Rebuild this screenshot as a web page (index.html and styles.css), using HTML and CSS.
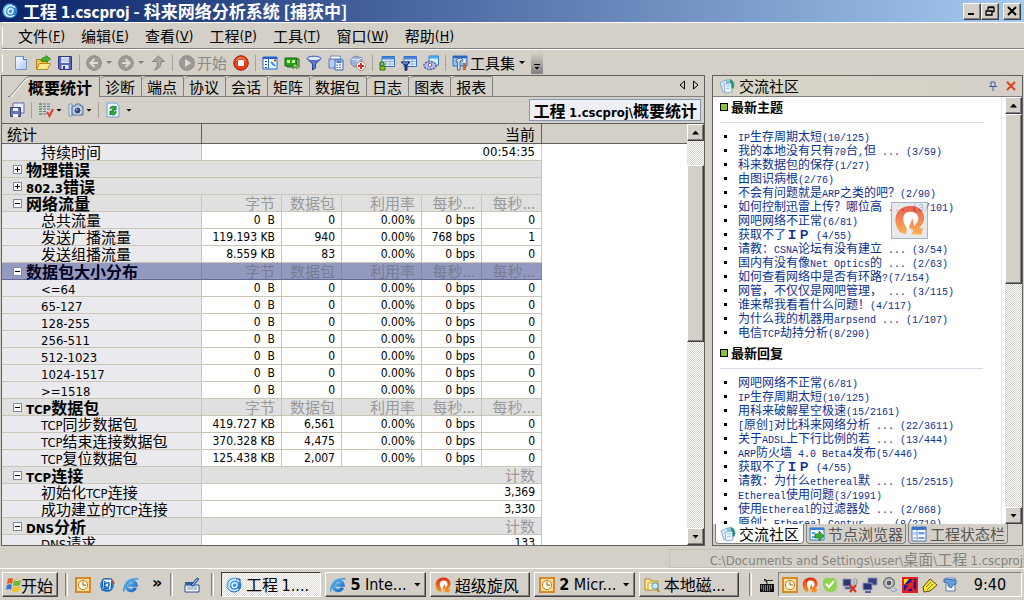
FILE: index.html
```html
<!DOCTYPE html>
<html lang="zh-CN">
<head>
<meta charset="utf-8">
<title>工程 1.cscproj - 科来网络分析系统</title>
<link rel="stylesheet" href="styles.css">
</head>
<body>
<svg class="defs" aria-hidden="true">
<defs>
<linearGradient id="g-blue" x1="0" y1="0" x2="1" y2="1"><stop offset="0" stop-color="#6fc4f6"/><stop offset="1" stop-color="#1264c4"/></linearGradient>
<linearGradient id="g-page" x1="0" y1="0" x2="1" y2="1"><stop offset="0" stop-color="#fff"/><stop offset="1" stop-color="#a9c8f4"/></linearGradient>
<linearGradient id="g-fire" x1="0" y1="0" x2="0" y2="1"><stop offset="0" stop-color="#e02a14"/><stop offset="1" stop-color="#ff9a1c"/></linearGradient>
</defs>
<symbol id="app" viewBox="0 0 16 16"><circle cx="8" cy="8" r="7.500" fill="url(#g-blue)"/><path d="M13 4.500C10 .8 3.500 2.500 3 8s5.500 7 9.500 4M6 8.500c0-3 5-4 5-.8S6.500 12 6 8.500" fill="none" stroke="#e8f7ff" stroke-width="1.400"/><path d="M10 2h4v2" stroke="#1548a0" fill="none"/></symbol>
<symbol id="new" viewBox="0 0 16 16"><path d="M2.500 1.500h8l3 3v10h-11z" fill="url(#g-page)" stroke="#6f93cd"/><path d="M10.500 1.500v3h3" fill="#fff" stroke="#4b74b8"/></symbol>
<symbol id="open" viewBox="0 0 16 16"><path d="M1.500 14.500V4.500h4l1 2h6v8z" fill="#f0c850" stroke="#a87f1c"/><path d="M1.500 14.500l3-6h11l-3 6z" fill="#ffe88a" stroke="#b58c20"/><path d="M6 5.500Q7 1.500 11 2.500V.5l4.500 3.500L11 7V5Q8 4.500 8 7z" fill="#43bd2a" stroke="#17700e" stroke-width=".7"/></symbol>
<symbol id="save" viewBox="0 0 16 16"><path d="M1.500 1.500h13v13h-12l-1-1z" fill="#5866b8" stroke="#2b3884"/><path d="M4 2h8v6H4z" fill="#e8edff"/><path d="M4 4h8M4 6h8" stroke="#9eb0df"/><path d="M4.500 10h7v4h-7z" fill="#dfe3ef"/><path d="M6 11h2v3H6z" fill="#303d80"/></symbol>
<symbol id="back" viewBox="0 0 16 16"><circle cx="8" cy="8" r="7.300" fill="#9d9b96" stroke="#8c8a86"/><path d="M12 8H5m3.500-4L4.500 8l4 4" fill="none" stroke="#dedcd6" stroke-width="2"/></symbol>
<symbol id="fwd" viewBox="0 0 16 16"><circle cx="8" cy="8" r="7.300" fill="#9d9b96" stroke="#8c8a86"/><path d="M4 8h7M7.500 4l4 4-4 4" fill="none" stroke="#dedcd6" stroke-width="2"/></symbol>
<symbol id="up" viewBox="0 0 16 16"><path d="M8.500 1l6 5.500H11c.5 4-2 7.500-6.500 8.500 3-3 3-5 2.500-8.500H2.500z" fill="#aaa8a3" stroke="#83817c"/></symbol>
<symbol id="play" viewBox="0 0 16 16"><circle cx="8" cy="8" r="7.300" fill="#9b9a96" stroke="#8c8a86"/><path d="M6 4l6 4-6 4z" fill="#dddbd6"/></symbol>
<symbol id="stop" viewBox="0 0 16 16"><circle cx="8" cy="8" r="7.300" fill="#e1401b" stroke="#a52209"/><path d="M3 6a5.500 5.500 0 0 1 10 0" stroke="#ff9b74" fill="none"/><rect x="5" y="5" width="6" height="6" rx="1" fill="#fff"/></symbol>
<symbol id="panes" viewBox="0 0 16 16"><path d="M1 2h14v12H1z" fill="#f5faff" stroke="#2567c6"/><path d="M1 2h14v2H1z" fill="#1e62d0"/><path d="M6.500 4v10" stroke="#2a6ed0"/><path d="M3 6h2v1H3m0 2h2v1H3m0 2h2v1H3" fill="#1f4cab"/><path d="M9 7l4 4" stroke="#3d8cf0" stroke-width="2"/><path d="M12 5.500h2" stroke="#e43b26" stroke-width="2"/></symbol>
<symbol id="card" viewBox="0 0 16 16"><path d="M1 3h12v8H1z" fill="#2fa51c" stroke="#13600e"/><path d="M3 5h3v3H3m5-3h3v3H8" fill="#c8f48f"/><path d="M13 4h2v9M4 11v2m2-2v2m2-2v2" stroke="#126012" fill="none"/><path d="M9 9h4v5l-2-2-2 2z" fill="#86d94b" stroke="#176b12" stroke-width=".7"/></symbol>
<symbol id="funnel" viewBox="0 0 16 16"><path d="M1 3.500L6.500 9v6l3-2V9L15 3.500z" fill="#587ed0" stroke="#213f93"/><ellipse cx="8" cy="3.500" rx="6.800" ry="2.300" fill="#dceaff" stroke="#3558ae"/></symbol>
<symbol id="calc" viewBox="0 0 16 16"><path d="M1 4h12v9H1z" fill="#b8cff0" stroke="#5c7cb5"/><path d="M3 1h9l1 3H2z" fill="#f6f9ff" stroke="#738cb8"/><path d="M7 5h8v10H7z" fill="#e8f0ff" stroke="#3b63b0"/><path d="M8.500 7h5" stroke="#4c77d0" stroke-width="2"/><path d="M8.500 10h1.500m1 0h2M8.500 12.500h1.500m1 0h2" stroke="#5873aa"/></symbol>
<symbol id="heal" viewBox="0 0 16 16"><path d="M1 4l4-3 7 2v8l-8 1-3-3z" fill="#9ab2df" stroke="#7187b4"/><path d="M1 4l7 1 4-2M8 5v7" fill="none" stroke="#e7f0ff"/><circle cx="11" cy="11" r="4.500" fill="#fff" stroke="#b77b78"/><path d="M11 8v6m-3-3h6" stroke="#e12a1c" stroke-width="2"/></symbol>
<symbol id="grid" viewBox="0 0 16 16"><path d="M3 1.500h12.500v10H3z" fill="#f3f8ff" stroke="#3571c6"/><path d="M3 2h12.500v2.500H3z" fill="#4684dd"/><path d="M4 6.500h11M4 9h11M7 5v6m4-6v6" stroke="#88aede"/></symbol>
<symbol id="gridkey" viewBox="0 0 16 16"><use href="#grid"/><circle cx="3" cy="9" r="2" fill="none" stroke="#44850b" stroke-width="1.500"/><path d="M1 11h5v4H1z" fill="#83bc24" stroke="#36700c"/></symbol>
<symbol id="gridfun" viewBox="0 0 16 16"><use href="#grid"/><path d="M0 7h9L6 10v5l-2 .5V10z" fill="#2848a0" stroke="#112874"/><path d="M2 8h5" stroke="#9fb4ef"/></symbol>
<symbol id="gear" viewBox="0 0 16 16"><path d="M6 1h9.500v9H6z" fill="#d9f0ff" stroke="#267dd0"/><path d="M6 1h9.500v2.500H6z" fill="#42a2eb"/><ellipse cx="7" cy="10.500" rx="6" ry="4" fill="#b7b9e9" stroke="#555a9c" stroke-dasharray="2 1" stroke-width="1.500"/><circle cx="7" cy="10" r="1.700" fill="#fff" stroke="#666dac"/></symbol>
<symbol id="tools" viewBox="0 0 16 16"><path d="M1 1h14v10H1z" fill="#8fc1f5" stroke="#316ebc"/><path d="M1 1h14v2H1z" fill="#2c65c1"/><path d="M4 7l1-3 4-1 2 2-3 1v9H5.500V7z" fill="#dee3eb" stroke="#516988"/><path d="M12.500 4v5" stroke="#e8e8ee" stroke-width="2"/><path d="M12.500 8v7" stroke="#d56424" stroke-width="3"/></symbol>
<symbol id="saves" viewBox="0 0 16 16"><path d="M4 1h11v10H4z" fill="#e9edfc" stroke="#5f6ba5"/><path d="M1.500 5.500h10v9h-10z" fill="#6573b9" stroke="#37447d"/><path d="M4 6h5v3H4m0 3h5v3H4" fill="#f2f5ff"/></symbol>
<symbol id="listcheck" viewBox="0 0 16 16"><path d="M1 2h12M1 4.500h12M1 7h12M1 9.500h8M1 12h7" stroke="#4a75b6" stroke-dasharray="3 1"/><path d="M1 2h3m-3 2.500h3m-3 2.500h3m-3 2.500h3m-3 2.500h3" stroke="#34a45b"/><path d="M9 10l2.500 4L15 7" fill="none" stroke="#e33a2b" stroke-width="2"/></symbol>
<symbol id="camera" viewBox="0 0 16 16"><path d="M1 2h3v12H1z" fill="#dce7f9" stroke="#8094bd"/><path d="M4 4h3l1-2h4l1 2h2v9H4z" fill="#a9bbdf" stroke="#5f749e"/><circle cx="9.500" cy="8.500" r="3.600" fill="#344581" stroke="#eef3ff"/><circle cx="8.500" cy="7.500" r="1" fill="#84b8ee"/></symbol>
<symbol id="refresh" viewBox="0 0 16 16"><path d="M2 1h9l3 3v11H2z" fill="#eaf2ff" stroke="#779ecf"/><path d="M5 7a3 3 0 0 1 5-2l1-1v4H7l1.500-1.500M11 9a3 3 0 0 1-5 3l-1 1V9h4l-1.500 1.500" fill="#2faa36" stroke="#16862a"/></symbol>
<symbol id="people" viewBox="0 0 16 16"><circle cx="10" cy="6.500" r="5.700" fill="#8fc6d8"/><path d="M11 1q6 4 3 10l-3-3z" fill="#278f5b"/><path d="M1 5l6-3 3 8-6 4z" fill="#d9e9fc" stroke="#6c9bd0" stroke-width=".8"/><path d="M5 6l7-1 1 9-7 1z" fill="#eef6ff" stroke="#72a1d8" stroke-width=".8"/><path d="M7 8l4-.5M7 10.500l4-.5" stroke="#9dbfe6"/></symbol>
<symbol id="node" viewBox="0 0 16 16"><path d="M1 2h14v12H1z" fill="#eff7ff" stroke="#2876cd"/><path d="M1 2h14v2H1z" fill="#3680dc"/><path d="M3 6h3v2H3m0 2h3v2H3" fill="#5d9de2"/><path d="M6 8h4V5l5 5-5 5v-3H6z" fill="#38ae35" stroke="#126f17" stroke-width=".7"/></symbol>
<symbol id="state" viewBox="0 0 16 16"><path d="M1 1h14v14H1z" fill="#f8fcff" stroke="#4e75ac"/><path d="M1 1h14v3H1z" fill="#3a77c9"/><path d="M2 6h12v3H2z" fill="#b9d5f5"/><path d="M6 4v11M2 12h12" stroke="#82a5d6"/><path d="M8 7h5m-5 5h5" stroke="#2d65ba"/></symbol>
<symbol id="clock" viewBox="0 0 16 16"><path d="M1 1h14v14H1z" fill="#f8dfa0" stroke="#d68b27" stroke-width="2"/><circle cx="8" cy="8" r="4.600" fill="#fff8de" stroke="#b78336"/><path d="M8 4.500V8h3" fill="none" stroke="#8c632a"/></symbol>
<symbol id="mail" viewBox="0 0 16 16"><circle cx="8" cy="8" r="7" fill="#2687cf"/><path d="M4 2h9l-1 11H3z" fill="#e6f5ff" stroke="#15509b"/><path d="M5 8q6-5 5 0t-4 1m0-5l-1 8 5-1" fill="none" stroke="#1968c3" stroke-width="1.500"/><path d="M13 2l3 4-2 2z" fill="#e54021"/></symbol>
<symbol id="ie" viewBox="0 0 16 16"><path d="M12.500 10.800A5 5 0 1 1 13 8H5" fill="none" stroke="url(#g-blue)" stroke-width="3.400"/><path d="M1 14.500C-1 9 9 0 15.500 2" fill="none" stroke="#3b96dd" stroke-width="1.500"/></symbol>
<symbol id="pen" viewBox="0 0 16 16"><path d="M1 8h14v7H1z" fill="#f5f8ff" stroke="#244d8d"/><path d="M3 10h10M3 12h10" stroke="#829abf"/><path d="M1 5h9v3H1z" fill="#325f9b"/><path d="M7 8l6-7 2 1-6 7z" fill="#87b7ea" stroke="#1e4380"/></symbol>
<symbol id="win" viewBox="0 0 16 16"><path d="M3 2q3-2 5 0L7 7Q4.500 5.500 2 7z" fill="#eb5a29"/><path d="M9 3q3 2 7 0l-1 5q-4 2-7 0z" fill="#70b82c"/><path d="M2 8q2.500-1.500 5 0l-1 5q-3-2-5 0z" fill="#3474d8"/><path d="M8 9q3 2 7 0l-1 5q-4 2-7 0z" fill="#f5be22"/></symbol>
<symbol id="whirl" viewBox="0 0 16 16"><path d="M3 14C-1 9 0 1 8 .5c7-.5 9 6 6.500 9.500L13 12h2l-1 3.500-5-.5 1-2-3-2-1 4z" fill="url(#g-fire)"/><path d="M5 9Q4 3.500 8.500 3.500T12.500 8L10.500 11 9.500 7 7 13z" fill="#fff"/></symbol>
<symbol id="folder" viewBox="0 0 16 16"><path d="M1 2h5l1 2h7v9H1z" fill="#ffe88f" stroke="#b38a22"/><path d="M4 6h9v7H4z" fill="#fdf7c8" stroke="#c4a03b"/><circle cx="11" cy="9" r="3.200" fill="#c9efff" stroke="#4c99bf"/><path d="M13 12l2 3" stroke="#a9813a" stroke-width="2"/></symbol>
<symbol id="kbd" viewBox="0 0 16 16"><path d="M1 7h14v8H1z" fill="#111"/><path d="M2 9h12M2 11h12M4 13h8" stroke="#eee" stroke-dasharray="1 1"/><path d="M8 7V5L5 3l1-1 2 2 2-1 1 1 2-1 1 1" stroke="#111" fill="none"/></symbol>
<symbol id="ok" viewBox="0 0 16 16"><path d="M1 5q0-5 6-4 8-1 8 6 0 9-7 8Q0 14 1 5" fill="#8bd54a"/><path d="M4 7l3 3 5-6" fill="none" stroke="#fff" stroke-width="2"/></symbol>
<symbol id="netx" viewBox="0 0 16 16"><path d="M1 2h8v7H1zM3 10h7v2H3z" fill="#293773" stroke="#8993b6"/><path d="M11 2q3 3 0 6m2-7q4 4 0 8" fill="none" stroke="#858a9b"/><path d="M8 8l6 7m0-7l-6 7" stroke="#dc2c23" stroke-width="2"/></symbol>
<symbol id="net" viewBox="0 0 16 16"><path d="M6 1h9v7H6z" fill="#34447f" stroke="#8790b7"/><path d="M1 6h9v7H1z" fill="#233575" stroke="#939dca"/><path d="M3 15h6" stroke="#566598" stroke-width="2"/></symbol>
<symbol id="sound" viewBox="0 0 16 16"><circle cx="7" cy="6" r="5.500" fill="#a7a8a9" stroke="#626466"/><circle cx="7" cy="6" r="3" fill="#545759" stroke="#eee"/><path d="M10 10l5 3-4 2-3-4z" fill="#d8ddec" stroke="#8c95b3"/></symbol>
<symbol id="ninja" viewBox="0 0 16 16"><path d="M1 1h14v14H1z" fill="#1818a8" stroke="#e22020" stroke-width="2"/><path d="M2 2h5L2 8z" fill="#ffe600"/><circle cx="11" cy="4" r="1.800" fill="#ee2418"/><path d="M9 5l3 1-1 4 3 4h-3l-2-3-4 3H2l5-6-3 1-1-1z" fill="#ee2418"/></symbol>
<symbol id="note" viewBox="0 0 16 16"><path d="M1 10l7-8 7 6-7 6-6 1z" fill="#f7e92c" stroke="#544d0c"/><path d="M4 10l5-5m-4 8l6-6" stroke="#7d7517"/></symbol>
<symbol id="flag" viewBox="0 0 16 16"><path d="M4 1h9v13H4z" fill="#edf4ff" stroke="#6681ac"/><path d="M2 2l12 1v4l-3 1-2 3-3-2V6L2 5z" fill="#639fda" stroke="#386da9"/></symbol>
</svg>

<header class="titlebar">
<svg class="ico"><use href="#app"/></svg>
<h1>工程 <span class="l">1.cscproj</span> - 科来网络分析系统 [捕获中]</h1>
<div class="winbtns">
<button class="raised" aria-label="最小化"><svg viewBox="0 0 10 10"><path d="M1 8h6" stroke="#000" stroke-width="2"/></svg></button>
<button class="raised" aria-label="还原"><svg viewBox="0 0 10 10"><path d="M3 1.500h6v4H7M3 1v3M1 5v4h6V5zM1 5h6M3 1h6" fill="none" stroke="#000" stroke-width="1.300"/></svg></button>
<button class="raised close" aria-label="关闭"><svg viewBox="0 0 10 10"><path d="M1 1l8 8M9 1L1 9" stroke="#000" stroke-width="2"/></svg></button>
</div>
</header>

<nav class="menubar">
<button>文件<span class="l">(<u>F</u>)</span></button><button>编辑<span class="l">(<u>E</u>)</span></button><button>查看<span class="l">(<u>V</u>)</span></button><button>工程<span class="l">(<u>P</u>)</span></button><button>工具<span class="l">(<u>T</u>)</span></button><button>窗口<span class="l">(<u>W</u>)</span></button><button>帮助<span class="l">(<u>H</u>)</span></button>
</nav>

<div class="toolbar" role="toolbar">
<button aria-label="新建"><svg class="ico"><use href="#new"/></svg></button>
<button aria-label="打开"><svg class="ico"><use href="#open"/></svg></button>
<button aria-label="保存"><svg class="ico"><use href="#save"/></svg></button>
<span class="sep"></span>
<button class="dim" aria-label="后退"><svg class="ico"><use href="#back"/></svg><i class="caret"></i></button>
<button class="dim" aria-label="前进"><svg class="ico"><use href="#fwd"/></svg><i class="caret"></i></button>
<button aria-label="向上"><svg class="ico"><use href="#up"/></svg></button>
<span class="sep"></span>
<button class="dim"><svg class="ico"><use href="#play"/></svg><span>开始</span></button>
<button aria-label="停止"><svg class="ico"><use href="#stop"/></svg></button>
<span class="sep"></span>
<button aria-label="窗格"><svg class="ico"><use href="#panes"/></svg></button>
<button aria-label="网卡"><svg class="ico"><use href="#card"/></svg></button>
<button aria-label="过滤器"><svg class="ico"><use href="#funnel"/></svg></button>
<button aria-label="缓存"><svg class="ico"><use href="#calc"/></svg></button>
<button aria-label="诊断"><svg class="ico"><use href="#heal"/></svg></button>
<span class="sep"></span>
<button aria-label="名字表"><svg class="ico"><use href="#gridkey"/></svg></button>
<button aria-label="过滤表"><svg class="ico"><use href="#gridfun"/></svg></button>
<button aria-label="选项"><svg class="ico"><use href="#gear"/></svg></button>
<span class="sep"></span>
<button><svg class="ico"><use href="#tools"/></svg><span>工具集</span><i class="caret"></i></button>
<button class="overflow" aria-label="更多"><i class="bar"></i><i class="caret"></i></button>
</div>

<main class="work">
<section class="stats">
<div class="tabs" role="tablist">
<button class="active" role="tab"><svg class="slope" viewBox="0 0 20 20"><path d="M0 20h2L17 2q1-1.500 3-1.500V20z" fill="#d4d0c8"/><path d="M0 19.500h2L17 2q1-1.500 3-1.500" fill="none" stroke="#808080"/><path d="M3 20L18 2.500q1-1 2-1" fill="none" stroke="#fff"/></svg><span>概要统计</span></button>
<button role="tab">诊断</button><button role="tab">端点</button><button role="tab">协议</button><button role="tab">会话</button><button role="tab">矩阵</button><button role="tab">数据包</button><button role="tab">日志</button><button role="tab">图表</button><button role="tab">报表</button>
<span class="tabfill"></span>
<span class="tabnav"><svg viewBox="0 0 20 10"><path d="M5.500 1v8L1 5zM14.500 1v8L19 5z" fill="none" stroke="#000"/></svg></span>
</div>
<div class="subbar">
<button aria-label="另存"><svg class="ico"><use href="#saves"/></svg></button>
<span class="sep"></span>
<button aria-label="列"><svg class="ico"><use href="#listcheck"/></svg><i class="caret"></i></button>
<button aria-label="快照"><svg class="ico"><use href="#camera"/></svg><i class="caret"></i></button>
<span class="sep"></span>
<button aria-label="刷新"><svg class="ico"><use href="#refresh"/></svg><i class="caret far"></i></button>
<strong class="crumb">工程 <span class="l">1.cscproj\</span>概要统计</strong>
</div>
<div class="gridwrap">
<div class="gridview">
<table>
<colgroup><col class="c0"><col class="c1"><col class="c2"><col class="c1"><col class="c2"><col class="c2"><col></colgroup>
<thead><tr><th>统计</th><th colspan="5" class="r">当前</th><th></th></tr></thead>
<tbody>
<tr><td>持续时间</td><td colspan="5" class="l">00:54:35</td></tr>
<tr class="cat"><td colspan="6"><i class="box plus"></i>物理错误</td></tr>
<tr class="cat"><td colspan="6"><i class="box plus"></i><span class="l">802.3</span>错误</td></tr>
<tr class="cat"><td><i class="box"></i>网络流量</td><td>字节</td><td>数据包</td><td>利用率</td><td>每秒...</td><td>每秒...</td></tr>
<tr class="num"><td>总共流量</td><td>0 &nbsp;B</td><td>0</td><td>0.00%</td><td>0 bps</td><td>0</td></tr>
<tr class="num"><td>发送广播流量</td><td>119.193 KB</td><td>940</td><td>0.00%</td><td>768 bps</td><td>1</td></tr>
<tr class="num"><td>发送组播流量</td><td>8.559 KB</td><td>83</td><td>0.00%</td><td>0 bps</td><td>0</td></tr>
<tr class="cat sel"><td><i class="box"></i>数据包大小分布</td><td>字节</td><td>数据包</td><td>利用率</td><td>每秒...</td><td>每秒...</td></tr>
<tr class="num"><td><span class="l">&lt;=64</span></td><td>0 &nbsp;B</td><td>0</td><td>0.00%</td><td>0 bps</td><td>0</td></tr>
<tr class="num"><td><span class="l">65-127</span></td><td>0 &nbsp;B</td><td>0</td><td>0.00%</td><td>0 bps</td><td>0</td></tr>
<tr class="num"><td><span class="l">128-255</span></td><td>0 &nbsp;B</td><td>0</td><td>0.00%</td><td>0 bps</td><td>0</td></tr>
<tr class="num"><td><span class="l">256-511</span></td><td>0 &nbsp;B</td><td>0</td><td>0.00%</td><td>0 bps</td><td>0</td></tr>
<tr class="num"><td><span class="l">512-1023</span></td><td>0 &nbsp;B</td><td>0</td><td>0.00%</td><td>0 bps</td><td>0</td></tr>
<tr class="num"><td><span class="l">1024-1517</span></td><td>0 &nbsp;B</td><td>0</td><td>0.00%</td><td>0 bps</td><td>0</td></tr>
<tr class="num"><td><span class="l">&gt;=1518</span></td><td>0 &nbsp;B</td><td>0</td><td>0.00%</td><td>0 bps</td><td>0</td></tr>
<tr class="cat"><td><i class="box"></i><span class="l">TCP</span>数据包</td><td>字节</td><td>数据包</td><td>利用率</td><td>每秒...</td><td>每秒...</td></tr>
<tr class="num"><td><span class="l">TCP</span>同步数据包</td><td>419.727 KB</td><td>6,561</td><td>0.00%</td><td>0 bps</td><td>0</td></tr>
<tr class="num"><td><span class="l">TCP</span>结束连接数据包</td><td>370.328 KB</td><td>4,475</td><td>0.00%</td><td>0 bps</td><td>0</td></tr>
<tr class="num"><td><span class="l">TCP</span>复位数据包</td><td>125.438 KB</td><td>2,007</td><td>0.00%</td><td>0 bps</td><td>0</td></tr>
<tr class="cat"><td><i class="box"></i><span class="l">TCP</span>连接</td><td colspan="5">计数</td></tr>
<tr class="num"><td>初始化<span class="l">TCP</span>连接</td><td colspan="5">3,369</td></tr>
<tr class="num"><td>成功建立的<span class="l">TCP</span>连接</td><td colspan="5">3,330</td></tr>
<tr class="cat"><td><i class="box"></i><span class="l">DNS</span>分析</td><td colspan="5">计数</td></tr>
<tr class="num"><td><span class="l">DNS</span>请求</td><td colspan="5">133</td></tr>
</tbody>
</table>
</div>
<div class="scroll s1"><button class="raised" aria-label="向上滚动"><i class="tri up"></i></button><span class="pre"></span><span class="thumb raised"></span><span class="post"></span><button class="raised" aria-label="向下滚动"><i class="tri"></i></button></div>
</div>
</section>

<aside class="forum">
<div class="fhead"><svg class="ico"><use href="#people"/></svg><h2>交流社区</h2>
<svg class="pin" viewBox="0 0 10 10"><path d="M3 1v4M7 1v4M3 1h4M1 5.500h8M5 6v4" fill="none" stroke="#3a5da8"/></svg>
<button aria-label="关闭面板"><svg class="pin" viewBox="0 0 10 10"><path d="M1 1l8 8M9 1L1 9" stroke="#e03c1c" stroke-width="1.800"/></svg></button></div>
<div class="fbody">
<div class="flist">
<h3>最新主题</h3>
<ul>
<li><a href="#"><span>IP</span>生存周期太短<span>(10/125)</span></a></li>
<li><a href="#">我的本地没有只有<span>70</span>台<span>,</span>但<span> ... (3/59)</span></a></li>
<li><a href="#">科来数据包的保存<span>(1/27)</span></a></li>
<li><a href="#">由图识病根<span>(2/76)</span></a></li>
<li><a href="#">不会有问题就是<span>ARP</span>之类的吧？<span>(2/90)</span></a></li>
<li><a href="#">如何控制迅雷上传？哪位高<span> ... (3/101)</span></a></li>
<li><a href="#">网吧网络不正常<span>(6/81)</span></a></li>
<li><a href="#">获取不了<b>ＩＰ</b><span> (4/55)</span></a></li>
<li><a href="#">请教：<span>CSNA</span>论坛有没有建立<span> ... (3/54)</span></a></li>
<li><a href="#">国内有没有像<span>Net Optics</span>的<span> ... (2/63)</span></a></li>
<li><a href="#">如何查看网络中是否有环路<span>?(7/154)</span></a></li>
<li><a href="#">网管，不仅仅是网吧管理，<span> ... (3/115)</span></a></li>
<li><a href="#">谁来帮我看看什么问题！<span>(4/117)</span></a></li>
<li><a href="#">为什么我的机器用<span>arpsend ... (1/107)</span></a></li>
<li><a href="#">电信<span>TCP</span>劫持分析<span>(8/290)</span></a></li>
</ul>
<h3>最新回复</h3>
<ul>
<li><a href="#">网吧网络不正常<span>(6/81)</span></a></li>
<li><a href="#"><span>IP</span>生存周期太短<span>(10/125)</span></a></li>
<li><a href="#">用科来破解星空极速<span>(15/2161)</span></a></li>
<li><a href="#"><span>[</span>原创<span>]</span>对比科来网络分析<span> ... (22/3611)</span></a></li>
<li><a href="#">关于<span>ADSL</span>上下行比例的若<span> ... (13/444)</span></a></li>
<li><a href="#"><span>ARP</span>防火墙<span> 4.0 Beta4</span>发布<span>(5/446)</span></a></li>
<li><a href="#">获取不了<b>ＩＰ</b><span> (4/55)</span></a></li>
<li><a href="#">请教：为什么<span>ethereal</span>默<span> ... (15/2515)</span></a></li>
<li><a href="#"><span>Ethereal</span>使用问题<span>(3/1991)</span></a></li>
<li><a href="#">使用<span>Ethereal</span>的过滤器处<span> ... (2/868)</span></a></li>
<li><a href="#">原创：<span>Ethereal Contur ... (8/2710)</span></a></li>
</ul>
</div>
<div class="scroll s2"><button class="raised" aria-label="向上滚动"><i class="tri up"></i></button><span class="pre"></span><span class="thumb raised"></span><span class="post"></span><button class="raised" aria-label="向下滚动"><i class="tri"></i></button></div>
<div class="floater"><svg viewBox="0 0 16 16"><use href="#whirl"/></svg></div>
</div>
<div class="ftabs" role="tablist">
<button class="active" role="tab"><svg class="ico"><use href="#people"/></svg>交流社区</button>
<button role="tab"><svg class="ico"><use href="#node"/></svg>节点浏览器</button>
<button role="tab"><svg class="ico"><use href="#state"/></svg>工程状态栏</button>
</div>
</aside>
</main>

<footer class="status"><span class="path"><span class="l">C:\Documents and Settings\user\</span>桌面<span class="l">\</span>工程 <span class="l">1.cscproj</span></span></footer>

<footer class="taskbar">
<button class="raised start"><svg class="ico"><use href="#win"/></svg>开始</button>
<span class="grip"></span>
<div class="quick">
<button aria-label="Outlook"><svg class="ico"><use href="#clock"/></svg></button>
<button aria-label="邮件"><svg class="ico"><use href="#mail"/></svg></button>
<button aria-label="Internet Explorer"><svg class="ico"><use href="#ie"/></svg></button>
<span class="chev">»</span>
</div>
<span class="grip"></span>
<button class="ime" aria-label="输入法"><svg class="ico"><use href="#pen"/></svg></button>
<span class="grip"></span>
<div class="tasks">
<button class="on"><svg class="ico"><use href="#app"/></svg><span>工程 <span class="l">1....</span></span></button>
<button class="raised"><svg class="ico"><use href="#ie"/></svg><span class="l"><b>5</b> Inte...</span><i class="caret"></i></button>
<button class="raised"><svg class="ico"><use href="#whirl"/></svg><span>超级旋风</span></button>
<button class="raised"><svg class="ico"><use href="#clock"/></svg><span class="l"><b>2</b> Micr...</span><i class="caret"></i></button>
<button class="raised"><svg class="ico"><use href="#folder"/></svg><span>本地磁<span class="l">...</span></span></button>
</div>
<span class="grip"></span>
<svg class="ico kbd"><use href="#kbd"/></svg>
<div class="tray">
<svg class="ico"><use href="#clock"/></svg><svg class="ico"><use href="#whirl"/></svg><svg class="ico"><use href="#ok"/></svg><svg class="ico"><use href="#netx"/></svg><svg class="ico"><use href="#net"/></svg><svg class="ico"><use href="#sound"/></svg><svg class="ico"><use href="#ninja"/></svg><svg class="ico"><use href="#note"/></svg><svg class="ico"><use href="#flag"/></svg>
<time>9:40</time>
</div>
</footer>
</body>
</html>
```
FILE: styles.css
```css
* { box-sizing: border-box; }
body {
  margin: 0;
  height: 100vh;
  display: flex;
  flex-direction: column;
  overflow: hidden;
  background: #d4d0c8;
  color: #000;
  font: 15px/16px "Noto Sans CJK SC", sans-serif;
  white-space: nowrap;
}
button {
  display: flex;
  align-items: center;
  margin: 0;
  padding: 0;
  border: 0;
  background: none;
  color: inherit;
  font: inherit;
  white-space: nowrap;
}
h1, h2, h3, ul { margin: 0; padding: 0; font-weight: normal; }
.defs { position: absolute; width: 0; height: 0; }
.ico { width: 16px; height: 16px; flex: none; }
.l { font-family: "DejaVu Sans Condensed", "DejaVu Sans", sans-serif; font-size: 13px; }
.raised {
  background: #d4d0c8;
  border: 1px solid;
  border-color: #fff #404040 #404040 #fff;
  box-shadow: inset -1px -1px #808080;
}
.sep { width: 1px; height: 16px; background: #a5a29b; flex: none; }
.caret {
  width: 6px;
  height: 3px;
  margin-left: 4px;
  background: #000;
  clip-path: polygon(0 0, 100% 0, 50% 100%);
  flex: none;
}

.titlebar {
  display: flex;
  align-items: center;
  height: 22px;
  flex: none;
  padding: 0 3px 0 2px;
  background: linear-gradient(90deg, #0a246a, #a6caf0);
  color: #fff;
}
.titlebar h1 { flex: 1; margin-left: 5px; font-size: 17px; line-height: 20px; font-weight: bold; }
.titlebar .l { font-size: 15px; line-height: 1px; }
.winbtns { display: flex; }
.winbtns button { width: 18px; height: 17px; justify-content: center; }
.winbtns svg { width: 10px; height: 10px; }
.winbtns .close { margin-left: 4px; }

.menubar {
  display: flex;
  gap: 16px;
  height: 27px;
  flex: none;
  padding: 0 16px;
  margin-left: 2px;
  border-top: 1px solid #fff;
  border-bottom: 1px solid #808080;
  background: linear-gradient(#fff, #fff) 0 4px / 1px 18px no-repeat;
}
.menubar .l { font-size: 14px; }
.toolbar {
  display: flex;
  align-items: center;
  gap: 6px;
  height: 26px;
  flex: none;
  padding-left: 11px;
  margin-left: 2px;
  border-top: 1px solid #fff;
  background: linear-gradient(#fff, #fff) 0 4px / 1px 18px no-repeat;
}
.toolbar button > span { margin-left: 2px; }
.dim { color: #8a8882; }
.dim .caret { background: #808080; }
.overflow {
  width: 12px;
  height: 22px;
  flex-direction: column;
  justify-content: flex-end;
  gap: 2px;
  padding-bottom: 4px;
  background: linear-gradient(#d4d0c8, #808080);
}
.overflow .bar { width: 6px; height: 1px; background: #000; }
.overflow .caret { margin: 0; }

.work { flex: 1; min-height: 0; display: flex; gap: 7px; padding: 0 1px; }
.stats {
  flex: 1;
  min-width: 0;
  display: flex;
  flex-direction: column;
  border: 1px solid #606060;
}
.tabs { display: flex; height: 21px; flex: none; }
.tabs button {
  height: 21px;
  padding: 0 6px 0 5px;
  border: 1px solid #808080;
  border-left: 0;
  border-top-left-radius: 5px;
  border-top-right-radius: 2px;
}
.tabs .active {
  padding: 0 7px 0 0;
  border: 0;
  border-right: 1px solid #808080;
  border-radius: 0;
  background: linear-gradient(#808080, #808080) 100% 0 / 8px 1px no-repeat;
  font-size: 16px;
  font-weight: bold;
}
.tabs .active span { display: flex; align-items: center; height: 21px; border-top: 1px solid #808080; }
.slope { width: 20px; height: 20px; margin-left: 6px; }
.tabfill { flex: 1; border-bottom: 1px solid #808080; }
.tabnav { width: 25px; padding: 0 4px 0 0; border-bottom: 1px solid #808080; }
.tabnav svg { width: 20px; height: 10px; }
.subbar { display: flex; align-items: center; gap: 6px; height: 26px; flex: none; padding: 0 3px 0 7px; }
.subbar .caret { margin-left: 2px; }
.subbar .far { margin-left: 5px; }
.crumb {
  margin-left: auto;
  height: 22px;
  padding: 0 3px;
  border: 1px solid #8296ae;
  background: #eef0f5;
  font-size: 16px;
  line-height: 20px;
}
.crumb .l { line-height: 1px; }

.gridwrap { flex: 1; min-height: 0; display: flex; border-top: 1px solid #606060; }
.gridview { flex: 1; min-width: 0; overflow: hidden; background: #fff; }
table { width: 100%; table-layout: fixed; border-collapse: separate; border-spacing: 0; }
.c0 { width: 200px; }
.c1 { width: 80px; }
.c2 { width: 60px; }
th {
  height: 20px;
  padding: 0 6px 0 5px;
  border-bottom: 1px solid #606060;
  border-right: 1px solid #606060;
  background: #d4d0c8;
  font-weight: normal;
  text-align: left;
}
th:last-child { border-right: 0; }
th.r { text-align: right; }
td {
  height: 17px;
  padding: 0 6px 0 0;
  border-right: 1px solid #c9c6b8;
  border-bottom: 1px solid #c9c6b8;
  line-height: 16px;
  text-align: right;
}
td span.l { line-height: 1px; }
td:first-child { padding-left: 39px; background: #eaeaee; text-align: left; }
.num td + td { font-family: "DejaVu Sans Condensed", "DejaVu Sans", sans-serif; font-size: 12px; }
.cat td { background: #e0e0e0; color: #999; }
.cat td:first-child { padding-left: 11px; background: #e0e0e0; color: #000; font-size: 16px; font-weight: bold; }
.sel td, .sel td:first-child { background: #949abf; border-bottom-color: #626a98; color: #777c96; }
.sel td { border-right-color: #7e85ae; }
.sel td:first-child { color: #00001c; }
.box {
  display: inline-block;
  width: 9px;
  height: 9px;
  margin-right: 4px;
  border: 1px solid #7b8ba5;
  background: linear-gradient(#000, #000) 1px 3px / 5px 1px no-repeat, #fff;
  vertical-align: 2px;
}
.plus {
  background: linear-gradient(#000, #000) 1px 3px / 5px 1px no-repeat, linear-gradient(#000, #000) 3px 1px / 1px 5px no-repeat, #fff;
}

.scroll {
  width: 17px;
  flex: none;
  display: flex;
  flex-direction: column;
  background: repeating-conic-gradient(#fff 0 25%, #d4d0c8 0 50%) 0 0 / 2px 2px;
}
.scroll button { height: 17px; flex: none; justify-content: center; }
.tri { width: 7px; height: 4px; background: #000; clip-path: polygon(0 0, 100% 0, 50% 100%); }
.tri.up { clip-path: polygon(50% 0, 100% 100%, 0 100%); }
.s1 .pre { flex: 24; }
.s1 .thumb { flex: 176; }
.s1 .post { flex: 186; }
.s2 .thumb { flex: 168; }
.s2 .post { flex: 224; }

.forum {
  width: 311px;
  flex: none;
  display: flex;
  flex-direction: column;
  border: 1px solid #606060;
}
.fhead {
  display: flex;
  align-items: center;
  height: 21px;
  flex: none;
  padding: 0 6px;
  border-bottom: 1px solid #808080;
  background: linear-gradient(90deg, #d8d5c6, #d4d0c8);
}
.fhead h2 { flex: 1; margin-left: 4px; font-size: 15px; }
.fhead button { margin-left: 8px; }
.pin { width: 10px; height: 10px; }
.fbody { position: relative; flex: 1; min-height: 0; display: flex; background: #fff; }
.flist { flex: 1; min-width: 0; margin-right: 3px; padding: 0 18px 0 7px; border-right: 1px solid #dfe7f3; overflow: hidden; }
.flist h3 {
  display: flex;
  align-items: center;
  gap: 3px;
  margin-bottom: 6px;
  padding-bottom: 5px;
  border-bottom: 1px solid #d3dbe6;
  font-size: 13px;
  line-height: 20px;
  font-weight: bold;
}
.flist h3::before { content: ""; width: 6px; height: 6px; border: 1px solid #000; background: #8fc03c; }
.flist ul + h3 { margin-top: 4px; }
.flist ul { list-style: none; }
.flist li { display: flex; align-items: center; height: 14px; padding-left: 4px; }
.flist li::before { content: ""; width: 3px; height: 3px; margin-right: 11px; background: #000; }
.flist a { color: #0a3290; font-size: 12px; line-height: 14px; text-decoration: none; }
.flist a span { font-family: "Liberation Mono", monospace; font-size: 10px; line-height: 1px; white-space: pre; }
.floater {
  position: absolute;
  top: 105px;
  right: 94px;
  width: 37px;
  height: 37px;
  padding: 2px;
  border: 1px solid #8a9bb0;
  background: #dfe3e6;
  opacity: .75;
}
.ftabs { display: flex; gap: 2px; height: 21px; flex: none; padding: 0 2px; }
.ftabs button {
  height: 20px;
  gap: 3px;
  padding: 0 4px;
  border: 1px solid #808080;
  border-top: 0;
  border-radius: 0 0 4px 4px;
  color: #555;
}
.ftabs .active { background: #fff; color: #000; }
.ftabs button + button { padding: 0 2px; }

.status { display: flex; justify-content: flex-end; height: 22px; flex: none; padding: 3px 0 0; color: #85837d; }
.path { padding: 0 0 0 40px; border: 1px solid #c4c0b7; line-height: 17px; }
.path .l { line-height: 1px; }
.taskbar {
  display: flex;
  align-items: center;
  height: 32px;
  flex: none;
  padding: 0 2px;
  border-top: 1px solid #fff;
  font-size: 16px;
}
.taskbar .l { font-size: 16px; }
.start { height: 25px; width: 56px; padding-left: 2px; }
.grip {
  width: 3px;
  height: 23px;
  margin: 0 7px;
  flex: none;
  border-left: 1px solid #808080;
  border-right: 1px solid #fff;
}
.quick { display: flex; gap: 8px; }
.chev { width: 16px; padding-left: 5px; font: bold 16px/12px "DejaVu Sans", sans-serif; }
.ime { margin: 0 4px; }
.tasks { flex: 1; min-width: 0; display: flex; gap: 4px; margin-right: 3px; }
.tasks button { flex: 1 1 0; min-width: 0; height: 25px; gap: 4px; padding: 0 4px; overflow: hidden; }
.tasks button > .caret { margin-left: auto; width: 7px; height: 4px; }
.tasks .on {
  border: 1px solid;
  border-color: #404040 #fff #fff #404040;
  background: repeating-conic-gradient(#fff 0 25%, #dedbd5 0 50%) 0 0 / 2px 2px;
}
.kbd { margin-right: 3px; }
.tray {
  display: flex;
  align-items: center;
  gap: 4px;
  width: 244px;
  flex: none;
  height: 25px;
  padding: 0 3px;
  border: 1px solid;
  border-color: #808080 #fff #fff #808080;
}
.tray time { margin: 0 auto; font: 16px/20px "DejaVu Sans Condensed", "DejaVu Sans", sans-serif; }
```
